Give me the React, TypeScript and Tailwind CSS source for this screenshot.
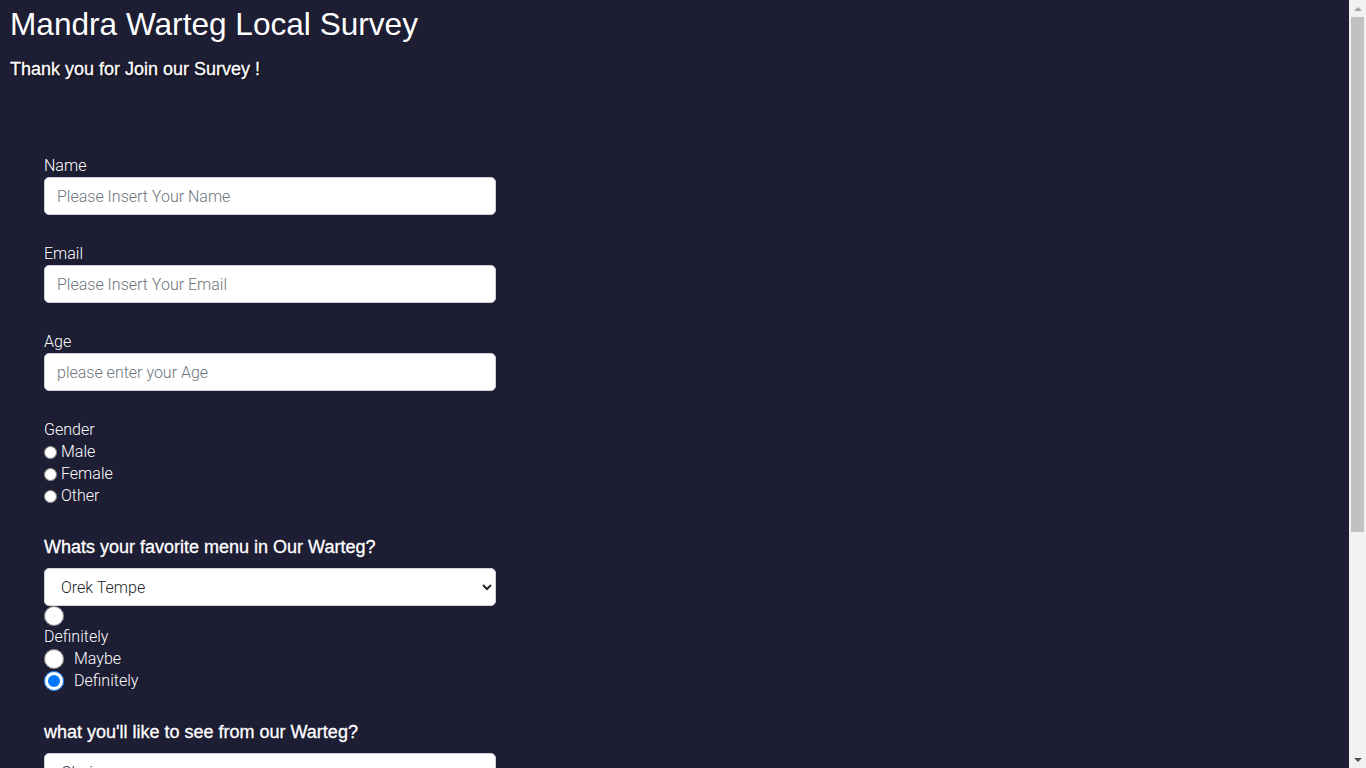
import React from "react";

const heading = "font-['Liberation_Sans',Arial,sans-serif]";
const body = "font-['Roboto','Noto_Sans',sans-serif] font-light";
const thick = "[-webkit-text-stroke:0.3px_white]";
const field =
  "block w-[452px] h-[38px] rounded-[5px] border border-[#ced4da] bg-white px-3 text-[16px] font-light text-[#212529] placeholder:text-[#6c757d] outline-none";

function TextField({ label, placeholder, type = "text" }: { label: string; placeholder: string; type?: string }) {
  return (
    <div className="mb-[27px]">
      <label className="block h-[23px] leading-[23px] text-white">{label}</label>
      <input type={type} placeholder={placeholder} className={field} />
    </div>
  );
}

// drawn stand-in for the browser's scrollbar, which the headless shot leaves out
function ScrollBar() {
  return (
    <div className="fixed right-0 top-0 flex h-screen w-[17px] flex-col items-center bg-[#f1f1f1]">
      <div className="flex h-[17px] w-full items-center justify-center">
        <div className="h-0 w-0 border-x-[4px] border-b-[4px] border-x-transparent border-b-[#a3a3a3]" />
      </div>
      <div className="h-[515px] w-[13px] bg-[#c1c1c1]" />
      <div className="flex-1" />
      <div className="flex h-[17px] w-full items-center justify-center">
        <div className="h-0 w-0 border-x-[4px] border-t-[4px] border-x-transparent border-t-[#505050]" />
      </div>
    </div>
  );
}

export default function App() {
  return (
    <div className={`min-h-[1094px] bg-[#1d1d33] pl-[10px] pr-[27px] pt-[6px] ${body}`}>
      <h1 className={`${heading} text-[31.6px] font-normal leading-[37px] text-white`}>Mandra Warteg Local Survey</h1>
      <p
        className={`${heading} ${thick} mt-[16px] text-[18px] font-normal leading-[21px] text-white [text-shadow:1px_1px_2px_#000]`}
      >
        Thank you for Join our Survey !
      </p>

      <form className="pl-[34px] pt-[74px]">
        <TextField label="Name" placeholder="Please Insert Your Name" />
        <TextField label="Email" placeholder="Please Insert Your Email" type="email" />
        <TextField label="Age" placeholder="please enter your Age" type="number" />

        <div>
          <p className="h-[23px] leading-[23px] text-white">Gender</p>
          {["Male", "Female", "Other"].map((g) => (
            <label key={g} className="flex h-[22px] items-center gap-[4px] text-white">
              <input type="radio" name="gender" className="h-[13px] w-[13px]" />
              {g}
            </label>
          ))}
        </div>

        <h5 className={`${heading} ${thick} mt-[30px] text-[18px] font-normal leading-[21px] text-white`}>
          Whats your favorite menu in Our Warteg?
        </h5>
        <select className={`${field} mt-[10px] px-[12px]`} defaultValue="orek">
          <option value="orek">Orek Tempe</option>
          <option value="sayur">Sayur Asem</option>
          <option value="telur">Telur Balado</option>
        </select>

        <input type="radio" name="recommend" className="block h-5 w-5" />
        <p className="h-[22px] leading-[22px] text-white">Definitely</p>
        <label className="flex h-[22px] items-center gap-[10px] text-white">
          <input type="radio" name="recommend" className="h-5 w-5" />
          Maybe
        </label>
        <label className="flex h-[22px] items-center gap-[10px] text-white">
          <input type="radio" name="recommend" className="h-5 w-5" defaultChecked />
          Definitely
        </label>

        <h5 className={`${heading} ${thick} mt-[30px] text-[18px] font-normal leading-[21px] text-white`}>
          what you'll like to see from our Warteg?
        </h5>
        <select className={`${field} mt-[10px] px-[12px]`} defaultValue="">
          <option value="">Choice</option>
          <option value="menu">More Menu</option>
          <option value="place">Bigger Place</option>
        </select>

        <h5 className={`${heading} ${thick} mt-[30px] text-[18px] font-normal leading-[21px] text-white`}>
          Any Comments or Suggestions?
        </h5>
        <textarea
          placeholder="Enter your comment here..."
          className="mt-[10px] block h-[120px] w-[452px] rounded-[5px] border border-[#ced4da] bg-white px-3 py-[6px] text-[16px] font-light text-[#212529] placeholder:text-[#6c757d] outline-none"
        />
        <button type="button" className="mt-[20px] rounded-[5px] bg-[#0d6efd] px-3 py-[6px] text-white">
          Submit
        </button>
      </form>
      <ScrollBar />
    </div>
  );
}
